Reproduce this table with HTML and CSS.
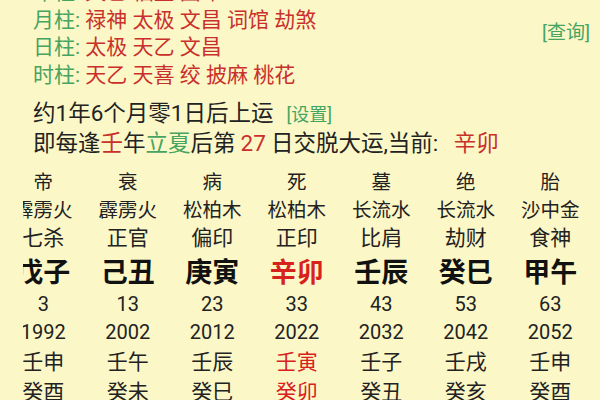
FILE: index.html
```html
<!DOCTYPE html>
<html lang="zh">
<head>
<meta charset="utf-8">
<link rel="stylesheet" href="styles.css">
</head>
<body>
<div class="page">
  <section class="shensha">
    <div class="lines">
      <div class="line"><span class="label">年柱:</span> <span class="red">天乙 福星 国印</span></div>
      <div class="line"><span class="label">月柱:</span> <span class="red">禄神 太极 文昌 词馆 劫煞</span></div>
      <div class="line"><span class="label">日柱:</span> <span class="red">太极 天乙 文昌</span></div>
      <div class="line"><span class="label">时柱:</span> <span class="red">天乙 天喜 绞 披麻 桃花</span></div>
    </div>
    <div class="query"><span class="link">[查询]</span></div>
  </section>
  <div class="info">约1年6个月零1日后上运<span class="link small">[设置]</span></div>
  <div class="info">即每逢<span class="red">壬</span>年<span class="green">立夏</span>后第<span class="red num">27</span>日交脱大运,当前: <span class="red now">辛卯</span></div>
  <div class="scroller">
    <div class="dayun">
      <div class="c s">帝</div><div class="c s">衰</div><div class="c s">病</div><div class="c s">死</div><div class="c s">墓</div><div class="c s">绝</div><div class="c s">胎</div>
      <div class="c s">霹雳火</div><div class="c s">霹雳火</div><div class="c s">松柏木</div><div class="c s">松柏木</div><div class="c s">长流水</div><div class="c s">长流水</div><div class="c s">沙中金</div>
      <div class="c m">七杀</div><div class="c m">正官</div><div class="c m">偏印</div><div class="c m">正印</div><div class="c m">比肩</div><div class="c m">劫财</div><div class="c m">食神</div>
      <div class="c gz">戊子</div><div class="c gz">己丑</div><div class="c gz">庚寅</div><div class="c gz cur">辛卯</div><div class="c gz">壬辰</div><div class="c gz">癸巳</div><div class="c gz">甲午</div>
      <div class="c n">3</div><div class="c n">13</div><div class="c n">23</div><div class="c n">33</div><div class="c n">43</div><div class="c n">53</div><div class="c n">63</div>
      <div class="c n">1992</div><div class="c n">2002</div><div class="c n">2012</div><div class="c n">2022</div><div class="c n">2032</div><div class="c n">2042</div><div class="c n">2052</div>
      <div class="c m">壬申</div><div class="c m">壬午</div><div class="c m">壬辰</div><div class="c m cur">壬寅</div><div class="c m">壬子</div><div class="c m">壬戌</div><div class="c m">壬申</div>
      <div class="c m">癸酉</div><div class="c m">癸未</div><div class="c m">癸巳</div><div class="c m cur">癸卯</div><div class="c m">癸丑</div><div class="c m">癸亥</div><div class="c m">癸酉</div>
    </div>
  </div>
</div>
</body>
</html>
```

FILE: styles.css
```css
html, body {
  margin: 0;
  padding: 0;
  background: #fcf7c7;
  overflow: hidden;
}
body {
  width: 600px;
  height: 400px;
  font-family: Roboto, "Noto Sans CJK SC", sans-serif;
  color: #222;
}
.page {
  margin-top: -21px;
}
.shensha {
  display: flex;
  justify-content: space-between;
  padding-left: 33px;
  padding-right: 10px;
}
.line {
  font-size: 21px;
  line-height: 27.5px;
  white-space: nowrap;
}
.label { color: #46a461; }
.red { color: #c9302c; }
.green { color: #46a461; }
.query {
  padding-top: 43px;
}
.link {
  color: #46a461;
  font-size: 19px;
  line-height: 22px;
}
.link.small {
  font-size: 18px;
  margin-left: 13px;
}
.info {
  padding-left: 33px;
  font-size: 22.5px;
  line-height: 30px;
  white-space: nowrap;
}
.num { margin: 0 5px; }
.now { margin-left: 10px; }
.shensha + .info {
  margin-top: 9px;
}
.scroller {
  margin-top: 8px;
  margin-left: 23px;
  overflow: hidden;
}
.dayun {
  margin-left: -22px;
  display: grid;
  grid-template-columns: repeat(7, 84.5px);
  grid-template-rows: 28px 28px 28px 40px 28px 27px 30px 30px;
}
.c {
  display: flex;
  align-items: center;
  justify-content: center;
  white-space: nowrap;
  color: #222;
}
.s { font-size: 19.5px; }
.m { font-size: 21px; }
.n { font-size: 20px; }
.gz {
  font-size: 27px;
  font-weight: bold;
  color: #111;
}
.cur { color: #d6211c; }
```
